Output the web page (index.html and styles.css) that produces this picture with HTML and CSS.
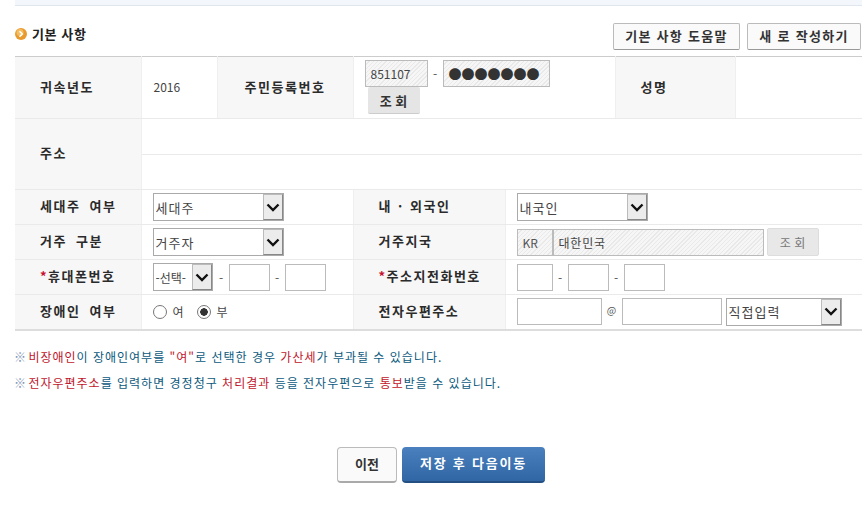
FILE: index.html
```html
<!DOCTYPE html>
<html lang="ko">
<head>
    <meta charset="UTF-8">
    <meta name="viewport" content="width=device-width, initial-scale=1.0">
    <title>기본 사항</title>
    <link rel="stylesheet" href="styles.css">
</head>
<body>
    <div class="top-bar"></div>

    <div class="section-head">
        <h2 class="section-title">
            <svg class="title-icon" width="12" height="12" viewBox="0 0 12 12">
                <circle cx="6" cy="6" r="6" fill="#e99a2c"/>
                <circle cx="5" cy="4.5" r="3.5" fill="#f5bd62"/>
                <path d="M4.5 3.2 7.3 6 4.5 8.8" fill="none" stroke="#fff" stroke-width="1.6"/>
            </svg>
            기본 사항
        </h2>
        <div class="head-btns">
            <button class="btn-white btn-help">기본 사항 도움말</button>
            <button class="btn-white btn-new">새 로 작성하기</button>
        </div>
    </div>

    <table class="form-table">
        <colgroup>
            <col class="c1"><col class="c2"><col class="c3"><col class="c4"><col class="c5"><col class="c6"><col class="c7">
        </colgroup>
        <tr class="row-id">
            <th>귀속년도</th>
            <td class="year">2016</td>
            <th class="center">주민등록번호</th>
            <td colspan="2" class="id-cell">
                <div class="inline">
                    <input class="field hatch w-63" value="851107" readonly>
                    <span class="dash">-</span>
                    <div class="field hatch w-107 dots">●●●●●●●</div>
                </div>
                <button class="btn-gray btn-lookup">조 회</button>
            </td>
            <th>성명</th>
            <td></td>
        </tr>
        <tr class="row-addr">
            <th rowspan="2">주소</th>
            <td colspan="6"></td>
        </tr>
        <tr class="row-addr2">
            <td colspan="6"></td>
        </tr>
        <tr class="row-form">
            <th>세대주 여부</th>
            <td colspan="2">
                <div class="select w-131"><select><option>세대주</option></select><span class="arrow"><svg width="14" height="9" viewBox="0 0 14 9"><path d="M1.5 1.5 7 7l5.5-5.5" fill="none" stroke="#111" stroke-width="2.4"/></svg></span></div>
            </td>
            <th class="no-word-gap">내 · 외국인</th>
            <td colspan="3">
                <div class="select w-131"><select><option>내국인</option></select><span class="arrow"><svg width="14" height="9" viewBox="0 0 14 9"><path d="M1.5 1.5 7 7l5.5-5.5" fill="none" stroke="#111" stroke-width="2.4"/></svg></span></div>
            </td>
        </tr>
        <tr class="row-form">
            <th>거주 구분</th>
            <td colspan="2">
                <div class="select w-131"><select><option>거주자</option></select><span class="arrow"><svg width="14" height="9" viewBox="0 0 14 9"><path d="M1.5 1.5 7 7l5.5-5.5" fill="none" stroke="#111" stroke-width="2.4"/></svg></span></div>
            </td>
            <th>거주지국</th>
            <td colspan="3">
                <div class="inline">
                    <input class="field hatch w-36 kr" value="KR" readonly>
                    <input class="field hatch w-211 country" value="대한민국" readonly>
                    <button class="btn-gray btn-off">조 회</button>
                </div>
            </td>
        </tr>
        <tr class="row-form">
            <th><em>*</em>휴대폰번호</th>
            <td colspan="2">
                <div class="inline">
                    <div class="select w-60"><select class="tight"><option>-선택-</option></select><span class="arrow"><svg width="14" height="9" viewBox="0 0 14 9"><path d="M1.5 1.5 7 7l5.5-5.5" fill="none" stroke="#111" stroke-width="2.4"/></svg></span></div>
                    <span class="dash sep">-</span>
                    <input class="field w-41">
                    <span class="dash sep">-</span>
                    <input class="field w-41">
                </div>
            </td>
            <th><em>*</em>주소지전화번호</th>
            <td colspan="3">
                <div class="inline">
                    <input class="field w-36">
                    <span class="dash sep">-</span>
                    <input class="field w-41">
                    <span class="dash sep">-</span>
                    <input class="field w-41">
                </div>
            </td>
        </tr>
        <tr class="row-form row-last">
            <th>장애인 여부</th>
            <td colspan="2">
                <div class="inline">
                    <input type="radio" name="dis" class="radio">
                    <label class="radio-label l1">여</label>
                    <input type="radio" name="dis" class="radio" checked>
                    <label class="radio-label">부</label>
                </div>
            </td>
            <th>전자우편주소</th>
            <td colspan="3">
                <div class="inline">
                    <input class="field w-85">
                    <span class="at">@</span>
                    <input class="field w-100">
                    <div class="select w-116"><select><option>직접입력</option></select><span class="arrow"><svg width="14" height="9" viewBox="0 0 14 9"><path d="M1.5 1.5 7 7l5.5-5.5" fill="none" stroke="#111" stroke-width="2.4"/></svg></span></div>
                </div>
            </td>
        </tr>
    </table>

    <div class="notes">
        <p><span class="mark">※</span> <b>비장애인</b>이 장애인여부를 <b>"여"</b>로 선택한 경우 <b>가산세</b>가 부과될 수 있습니다.</p>
        <p><span class="mark">※</span> <b>전자우편주소</b>를 입력하면 경정청구 <b>처리결과</b> 등을 전자우편으로 <b>통보</b>받을 수 있습니다.</p>
    </div>

    <div class="actions">
        <button class="btn-prev">이전</button>
        <button class="btn-save">저장 후 다음이동</button>
    </div>
</body>
</html>
```

FILE: styles.css
```css
body {
    font-family: "Noto Sans CJK KR", "Liberation Sans", sans-serif;
    background-color: #ffffff;
    margin: 0;
    padding: 0;
    color: #333;
    font-size: 12px;
    overflow: hidden;
}
button, input, select {
    font-family: inherit;
    margin: 0;
    box-sizing: border-box;
}
.top-bar {
    height: 5px;
    margin-left: 15px;
    background-color: #f3f7fc;
    border-bottom: 1px solid #dfe6ee;
}
.section-head {
    height: 50px;
    margin-left: 15px;
    display: flex;
    justify-content: space-between;
    align-items: flex-start;
}
.section-title {
    margin: 18px 0 0;
    height: 20px;
    display: flex;
    align-items: center;
    gap: 5px;
    font-size: 13px;
    font-weight: bold;
    color: #222;
    line-height: 20px;
    letter-spacing: 0.6px;
}
.head-btns {
    display: flex;
    gap: 7px;
    margin: 17px 1px 0 0;
}
.btn-white {
    height: 27px;
    padding: 0 0 3px;
    background-color: #fafafa;
    border: 1px solid #bbb;
    border-bottom-color: #999;
    border-radius: 2px;
    font-size: 13px;
    font-weight: bold;
    color: #333;
    letter-spacing: 1.3px;
}
.btn-help { width: 127px; }
.btn-new { width: 114px; }

.form-table {
    width: 847px;
    margin-left: 15px;
    border-collapse: collapse;
    table-layout: fixed;
    border-top: 1px solid #ccc;
    border-bottom: 2px solid #ddd;
}
.c1 { width: 126px; }
.c2 { width: 76px; }
.c3 { width: 136px; }
.c4 { width: 152px; }
.c5 { width: 110px; }
.c6 { width: 120px; }
.c7 { width: 127px; }
.form-table th, .form-table td {
    border-bottom: 1px solid #eaeaea;
    padding: 0;
    font-size: 12px;
}
.form-table th {
    background-color: #f7f7f7;
    border-left: 1px solid #efefef;
    border-right: 1px solid #efefef;
    text-align: left;
    padding: 0 0 3px 25px;
    font-size: 13px;
    font-weight: bold;
    color: #2b2b2b;
    letter-spacing: 1.5px;
    word-spacing: 4px;
}
.form-table th:first-child { border-left: none; }
.form-table th.center { text-align: center; padding-left: 0; }
.form-table th.no-word-gap { word-spacing: 1px; }
.form-table th em {
    font-style: normal;
    color: #c8102e;
}
.row-id { height: 62px; }
.row-addr { height: 36px; }
.row-addr2 { height: 35px; }
.row-form { height: 35px; }
.row-last { height: 35px; }
.row-form td { padding-left: 11px; }
.year { padding: 0 0 3px 12px !important; color: #444; }
.id-cell { padding: 3px 0 3px 11px !important; vertical-align: top; }

.inline {
    display: flex;
    align-items: center;
}
.field {
    height: 27px;
    border: 1px solid #bbb;
    background-color: #fff;
    padding: 0 5px;
    font-size: 12px;
    color: #444;
    outline: none;
}
.hatch {
    background: repeating-linear-gradient(135deg, #f6f6f6 0, #f6f6f6 2px, #e9e9e9 2px, #e9e9e9 3px);
}
.w-36 { width: 36px; }
.w-41 { width: 41px; }
.w-63 { width: 63px; }
.w-85 { width: 85px; }
.w-100 { width: 100px; }
.w-107 { width: 107px; box-sizing: border-box; }
.w-211 { width: 211px; }
.dots {
    display: flex;
    align-items: center;
    font-size: 13px;
    line-height: 1;
    color: #333;
    letter-spacing: 0;
}
.dash {
    width: 15px;
    text-align: center;
    color: #555;
}
.sep { width: 15px; }
.at {
    width: 20px;
    text-align: center;
    font-size: 10px;
    color: #555;
    margin-top: -5px;
}
.kr { color: #555; }
.country { padding-left: 5px; letter-spacing: 0.8px; }

.select {
    display: inline-flex;
    height: 28px;
    box-sizing: border-box;
    border: 1px solid #aaa;
    background-color: #fff;
    vertical-align: middle;
}
.select select {
    flex: 1;
    min-width: 0;
    border: none;
    background: none;
    appearance: none;
    padding: 0 2px;
    font-size: 13px;
    color: #444;
    outline: none;
    letter-spacing: 1px;
}
.select select.tight { padding: 0 0 0 2px; font-size: 12px; letter-spacing: 0; }
.w-131 { width: 131px; }
.w-60 { width: 60px; margin-right: 1px; }
.w-116 { width: 116px; margin-left: 4px; }
.arrow {
    width: 20px;
    flex-shrink: 0;
    display: flex;
    align-items: center;
    justify-content: center;
    background-color: #ececec;
    border: 1px solid #888;
    border-top-color: #bbb;
    border-left-color: #bbb;
    box-sizing: border-box;
}
.radio {
    appearance: none;
    width: 14px;
    height: 14px;
    margin: 0;
    border: 1px solid #777;
    border-radius: 50%;
    background-color: #fff;
}
.radio:checked {
    background: radial-gradient(circle, #333 0, #333 3.5px, #fff 4px);
}
.radio-label {
    margin-left: 6px;
    font-size: 12px;
    color: #444;
}
.l1 { margin-right: 13px; }

.btn-gray {
    width: 52px;
    height: 27px;
    padding: 0;
    background-color: #e5e5e5;
    border: none;
    border-bottom: 1px solid #ccc;
    border-radius: 2px;
    font-size: 13px;
    font-weight: bold;
    color: #333;
}
.btn-lookup { display: block; margin-left: 3px; }
.btn-off {
    margin-left: 3px;
    height: 28px;
    background-color: #e8e8e8;
    border: 1px solid #ddd;
    font-weight: normal;
    color: #777;
    font-size: 12px;
}

.notes {
    margin: 13px 0 0 14px;
    font-size: 12px;
    color: #0b5a7d;
    letter-spacing: 1px;
}
.notes p {
    margin: 0;
    height: 26px;
    line-height: 26px;
}
.notes b {
    font-weight: normal;
    color: #c0152a;
}
.mark {
    color: #7f96b5;
    letter-spacing: -2px;
}

.actions {
    margin-top: 51px;
    display: flex;
    justify-content: flex-start;
    gap: 5px;
    padding-left: 337px;
}
.btn-prev {
    width: 60px;
    height: 36px;
    padding: 0 0 2px;
    background-color: #fafafa;
    border: 1px solid #bbb;
    border-bottom: 2px solid #aaa;
    border-radius: 4px;
    font-size: 13px;
    font-weight: bold;
    color: #333;
}
.btn-save {
    width: 143px;
    height: 36px;
    padding: 0 0 2px;
    background: linear-gradient(#4a80bd, #2f66a3);
    border: none;
    border-bottom: 2px solid #234f82;
    border-radius: 4px;
    font-size: 13px;
    font-weight: bold;
    color: #fff;
    letter-spacing: 1.8px;
}
```
